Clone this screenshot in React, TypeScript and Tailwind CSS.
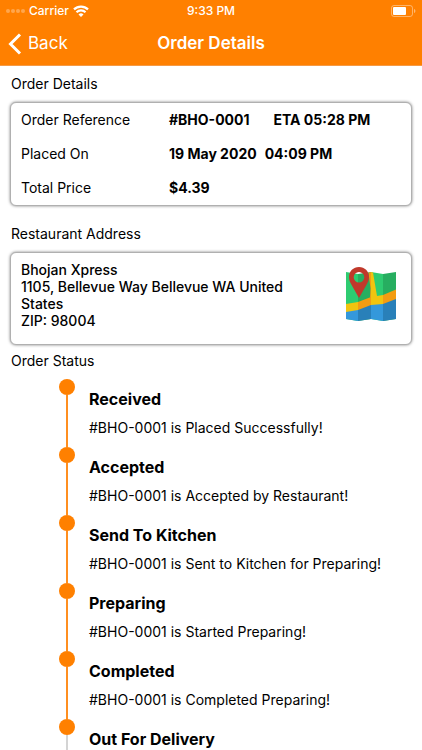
import React from 'react';

interface StatusStep {
  title: string;
  message?: string;
}

const steps: StatusStep[] = [
  { title: 'Received', message: '#BHO-0001 is Placed Successfully!' },
  { title: 'Accepted', message: '#BHO-0001 is Accepted by Restaurant!' },
  { title: 'Send To Kitchen', message: '#BHO-0001 is Sent to Kitchen for Preparing!' },
  { title: 'Preparing', message: '#BHO-0001 is Started Preparing!' },
  { title: 'Completed', message: '#BHO-0001 is Completed Preparing!' },
  { title: 'Out For Delivery' },
];

function WifiIcon() {
  return (
    <svg viewBox="0 0 16 12" className="h-3 w-4" fill="none" stroke="currentColor" strokeWidth="2.2" aria-hidden="true">
      <path d="M1 4.400a10 10 0 0 1 14 0" />
      <path d="M3.500 7.300a6.400 6.400 0 0 1 9 0" />
      <path d="M8 12 5.500 9.400a3.600 3.600 0 0 1 5 0Z" fill="currentColor" stroke="none" />
    </svg>
  );
}

function BatteryIcon() {
  return (
    <svg viewBox="0 0 25 12" className="h-3 w-[25px]" aria-hidden="true">
      <rect x="0.5" y="0.5" width="21" height="11" rx="2.5" fill="none" stroke="#fff" strokeOpacity="0.4" />
      <rect x="2" y="2" width="13" height="8" rx="1" fill="#fff" />
      <path d="M23 4v4c.8-.3 1.400-1.100 1.400-2S23.800 4.300 23 4Z" fill="#fff" fillOpacity="0.45" />
    </svg>
  );
}

function MapIcon() {
  return (
    <svg viewBox="0 0 52 56" className="h-14 w-[52px]" aria-hidden="true">
      <path d="M1 5l12 2v47L1 52Z" fill="#2ecc71" />
      <path d="M13 7l13-2v47l-13 2Z" fill="#27ae60" />
      <path d="M26 5l12 2v47l-12-2Z" fill="#2ecc71" />
      <path d="M38 7l13-2v47l-13 2Z" fill="#27ae60" />
      <path d="M1 44l12-2v12L1 52Z" fill="#3498db" />
      <path d="M13 42l13-5v15l-13 2Z" fill="#2980b9" />
      <path d="M26 37l12-1v18l-12-2Z" fill="#3498db" />
      <path d="M38 36l13-5v21l-13 2Z" fill="#2980b9" />
      <path d="M1 37l12-2v8L1 45Z" fill="#f1c40f" />
      <path d="M13 35l13-5v8l-13 5Z" fill="#f39c12" />
      <path d="M26 5l2 .4L32 29l6-1v9l-12 1Z" fill="#f1c40f" />
      <path d="M23.500 5.400 26 5v26l-1-.600.500-9Z" fill="#f39c12" />
      <path d="M38 28l13-5.500V32l-13 5Z" fill="#f39c12" />
      <path
        fillRule="evenodd"
        d="M14 0C8.300 0 4 4.300 4 10c0 3 1.100 5.500 2.600 8L14 31 21.400 18C22.900 15.500 24 13 24 10 24 4.300 19.700 0 14 0Zm0 5a5.300 5.300 0 1 1 0 10.600A5.300 5.300 0 0 1 14 5Z"
        fill="#c0392b"
      />
    </svg>
  );
}

function Card({ children, className = '' }: { children: React.ReactNode; className?: string }) {
  return (
    <div
      className={`rounded-md border border-[#b0b0b0] bg-white px-[10px] shadow-[0_0_3px_rgba(0,0,0,0.5)] ${className}`}
    >
      {children}
    </div>
  );
}

function OrderRow({ label, children }: { label: string; children: React.ReactNode }) {
  return (
    <div className="flex h-[34px] items-center">
      <dt className="w-[148px] shrink-0">{label}</dt>
      <dd className="flex font-bold">{children}</dd>
    </div>
  );
}

function TimelineItem({ step, isLast }: { step: StatusStep; isLast: boolean }) {
  return (
    <li className={isLast ? 'flex flex-1 gap-[14px]' : 'flex h-[68px] gap-[14px]'}>
      <div className="flex w-4 flex-col items-center">
        <span className="size-4 shrink-0 rounded-full bg-[#ff8000]" />
        <span className={isLast ? 'w-0.5 flex-1 bg-[#d4d4d4]' : 'w-0.5 flex-1 bg-[#ff8f20]'} />
      </div>
      <div className="pt-2">
        <h3 className="text-base leading-6 font-bold">{step.title}</h3>
        {step.message && <p className="mt-[7px] text-sm leading-5">{step.message}</p>}
      </div>
    </li>
  );
}

export default function App() {
  return (
    <div className="flex min-h-screen flex-col bg-white font-['Inter',sans-serif] text-sm text-black">
      <header className="bg-[#ff8000] text-white">
        <div className="grid h-[22px] grid-cols-3 items-center px-1.5 text-xs font-medium">
          <div className="flex items-center gap-1">
            <span className="flex gap-px opacity-30">
              <span className="size-1 rounded-full bg-white" />
              <span className="size-1 rounded-full bg-white" />
              <span className="size-1 rounded-full bg-white" />
              <span className="size-1 rounded-full bg-white" />
            </span>
            <span>Carrier</span>
            <WifiIcon />
          </div>
          <span className="text-center">9:33 PM</span>
          <div className="flex justify-end">
            <BatteryIcon />
          </div>
        </div>
        <div className="grid h-[43px] grid-cols-[1fr_auto_1fr] items-center px-2">
          <button type="button" className="flex items-center gap-1.5 justify-self-start text-[17px]">
            <svg viewBox="0 0 14 22" className="h-[22px] w-3.5" fill="none" stroke="currentColor" strokeWidth="3" aria-hidden="true">
              <path d="M12 1.500 2.500 11l9.500 9.500" />
            </svg>
            Back
          </button>
          <h1 className="text-[17px] font-semibold">Order Details</h1>
        </div>
        <div className="h-px bg-[#f59a45]" />
      </header>

      <main className="flex flex-1 flex-col px-[10px] pt-2">
        <section>
          <h2 className="mb-2 pl-px leading-5">Order Details</h2>
          <Card>
            <dl>
              <OrderRow label="Order Reference">
                <span>#BHO-0001</span>
                <span className="ml-6">ETA 05:28 PM</span>
              </OrderRow>
              <OrderRow label="Placed On">
                <span>19 May 2020</span>
                <span className="ml-2">04:09 PM</span>
              </OrderRow>
              <OrderRow label="Total Price">$4.39</OrderRow>
            </dl>
          </Card>
        </section>

        <section className="mt-[18px]">
          <h2 className="mb-2 pl-px leading-5">Restaurant Address</h2>
          <Card className="flex items-start justify-between pt-2 pb-[15px]">
            <address className="max-w-[280px] leading-[17px] font-medium not-italic">
              Bhojan Xpress
              <br />
              1105, Bellevue Way Bellevue WA United States
              <br />
              ZIP: 98004
            </address>
            <button type="button" aria-label="Open map" className="mt-1.5 mr-1">
              <MapIcon />
            </button>
          </Card>
        </section>

        <section className="mt-1.5 flex flex-1 flex-col">
          <h2 className="pl-px leading-5">Order Status</h2>
          <ol className="mt-2 flex flex-1 flex-col pl-[49px]">
            {steps.map((step, index) => (
              <TimelineItem key={step.title} step={step} isLast={index === steps.length - 1} />
            ))}
          </ol>
        </section>
      </main>
    </div>
  );
}
